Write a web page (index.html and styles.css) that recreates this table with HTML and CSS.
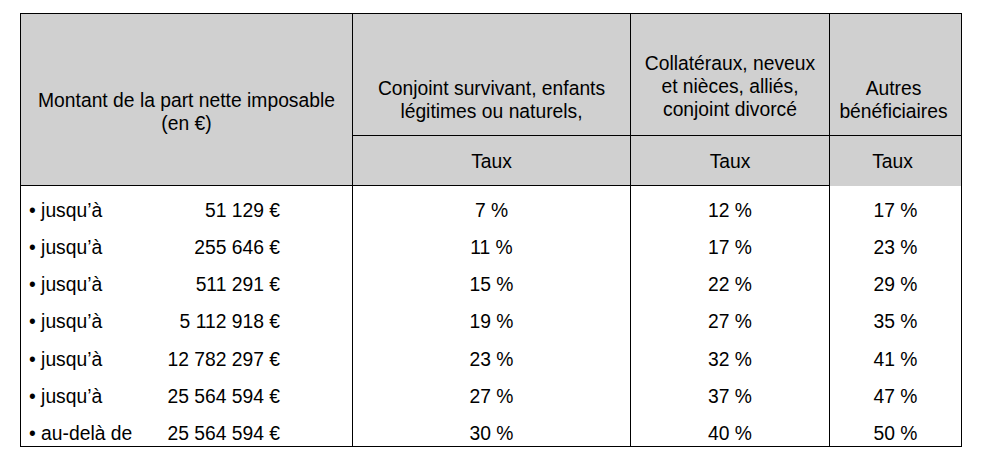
FILE: index.html
```html
<!DOCTYPE html>
<html lang="fr">
<head>
<meta charset="utf-8">
<title>Taux</title>
<link rel="stylesheet" href="styles.css">
</head>
<body>
<table class="rates">
  <colgroup>
    <col class="c1"><col class="c2"><col class="c3"><col class="c4">
  </colgroup>
  <thead>
    <tr class="h1">
      <th rowspan="2" class="hd hd-amount">Montant de la part nette imposable<br>(en €)</th>
      <th class="hd hd-c2">Conjoint survivant, enfants<br>légitimes ou naturels,</th>
      <th class="hd hd-c3">Collatéraux, neveux<br>et nièces, alliés,<br>conjoint divorcé</th>
      <th class="hd hd-c4">Autres<br>bénéficiaires</th>
    </tr>
    <tr class="h2">
      <th class="hd taux">Taux</th>
      <th class="hd taux">Taux</th>
      <th class="hd taux taux-open">Taux</th>
    </tr>
  </thead>
  <tbody>
    <tr class="row first"><td class="amt"><span class="lbl">• jusqu’à</span><span class="num">51 129 €</span></td><td>7 %</td><td>12 %</td><td class="open-top">17 %</td></tr>
    <tr class="row"><td class="amt"><span class="lbl">• jusqu’à</span><span class="num">255 646 €</span></td><td>11 %</td><td>17 %</td><td>23 %</td></tr>
    <tr class="row"><td class="amt"><span class="lbl">• jusqu’à</span><span class="num">511 291 €</span></td><td>15 %</td><td>22 %</td><td>29 %</td></tr>
    <tr class="row"><td class="amt"><span class="lbl">• jusqu’à</span><span class="num">5 112 918 €</span></td><td>19 %</td><td>27 %</td><td>35 %</td></tr>
    <tr class="row"><td class="amt"><span class="lbl">• jusqu’à</span><span class="num">12 782 297 €</span></td><td>23 %</td><td>32 %</td><td>41 %</td></tr>
    <tr class="row"><td class="amt"><span class="lbl">• jusqu’à</span><span class="num">25 564 594 €</span></td><td>27 %</td><td>37 %</td><td>47 %</td></tr>
    <tr class="row last"><td class="amt"><span class="lbl">• au-delà de</span><span class="num">25 564 594 €</span></td><td>30 %</td><td>40 %</td><td>50 %</td></tr>
  </tbody>
</table>
</body>
</html>
```
FILE: styles.css
```css
html, body {
  margin: 0;
  padding: 0;
  background: #ffffff;
}
body {
  padding: 13px 0 0 20px;
  font-family: "Liberation Sans", Arial, sans-serif;
  font-size: 19.3px;
  line-height: 23px;
  color: #000;
}
.rates {
  border-collapse: collapse;
  table-layout: fixed;
  width: 941px;
}
.c1 { width: 332px; }
.c2 { width: 278px; }
.c3 { width: 199px; }
.c4 { width: 132px; }

.rates th, .rates td {
  border: 1px solid #000;
  padding: 0;
  font-weight: normal;
  text-align: center;
}
.rates .hd {
  background: #d0d0d0;
}
.h1 { height: 122px; }
.h2 { height: 50px; }

.rates .hd-amount {
  vertical-align: top;
  padding-top: 75px;
}
.rates .hd-c2 {
  vertical-align: bottom;
  padding-bottom: 12px;
}
.rates .hd-c3 {
  vertical-align: bottom;
  padding-bottom: 14px;
}
.rates .hd-c4 {
  vertical-align: bottom;
  padding-bottom: 12px;
  padding-right: 4px;
}
.rates .taux {
  vertical-align: top;
  padding-top: 14px;
}
.rates .taux-open {
  border-bottom-style: hidden;
  padding-right: 6px;
}
.rates td.open-top {
  border-top-style: hidden;
}

.row { height: 37.3px; }
.rates .row td {
  vertical-align: top;
  padding-top: 13px;
  border-top: none;
  border-bottom: none;
}
.rates .row.last td {
  border-bottom: 1px solid #000;
}
.rates .row td.amt {
  text-align: left;
  padding-left: 8px;
}
.amt .lbl {
  display: inline-block;
  width: 122px;
}
.amt .num {
  display: inline-block;
  width: 129px;
  text-align: right;
}
```
